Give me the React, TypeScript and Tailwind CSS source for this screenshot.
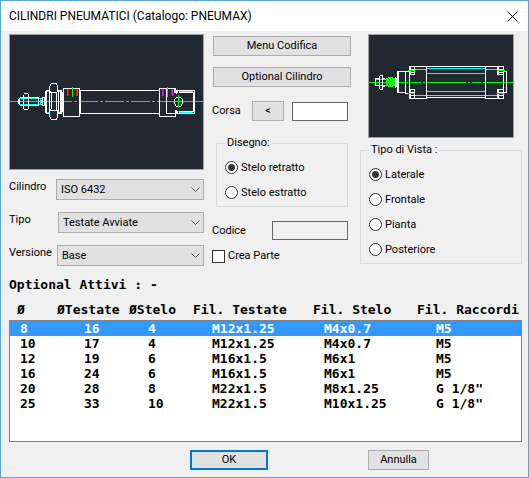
import type { ReactNode } from "react";

const ROWS = [
  ["8", "16", "4", "M12x1.25", "M4x0.7", "M5"],
  ["10", "17", "4", "M12x1.25", "M4x0.7", "M5"],
  ["12", "19", "6", "M16x1.5", "M6x1", "M5"],
  ["16", "24", "6", "M16x1.5", "M6x1", "M5"],
  ["20", "28", "8", "M22x1.5", "M8x1.25", 'G 1/8"'],
  ["25", "33", "10", "M22x1.5", "M10x1.25", 'G 1/8"'],
];

const HEADERS = ["Ø", "ØTestate", "ØStelo", "Fil. Testate", "Fil. Stelo", "Fil. Raccordi"];

const WHITE = "#ffffff";
const CYAN = "#00ffff";
const GREEN = "#00ff00";
const MAGENTA = "#ff00ff";
const RED = "#ff0000";

function CylinderDrawing() {
  return (
    <svg viewBox="10 35 193 134" className="block w-full" fill="none" shapeRendering="crispEdges" role="img" aria-label="Cilindro">
      <path d="M10 101.5H72M74 101.5H77M79 101.5H98M100 101.5H103M105 101.5H124M126 101.5H129M131 101.5H150M152 101.5H155M157 101.5H203" stroke={GREEN} />
      <g stroke={CYAN}>
        <path d="M20 98.5H38M20 104.5H38M40.5 98V105M41.5 100V103M39 98.5H42M39 104.5H42" />
        <path d="M46 91.5H50M46 112.5H50M58 91.5H62M58 112.5H62M179 91.5H193M179 112.5H193" />
      </g>
      <g stroke={WHITE}>
        <path d="M18.5 99V104M19.5 98V105M20 97.5H38M20 105.5H38M38.5 97V106M23.5 95V98M24 93.5H28M28.5 94V109M24 109.5H28M23.5 95V109" />
        <path d="M42.5 97V106M42 97.5H45M42 105.5H45M44.5 97V106" />
        <path d="M45.5 91V113M46.5 91V113M49.5 91V113M46 90.5H50M46 113.5H50" />
        <path d="M51.5 83.5H56.5L57.5 86.5V90.5L56.5 93.5V108.5L57.5 111.5V116.5L56.5 119.5H51.5L49.5 116.5V111.5L51.5 108.5V93.5L49.5 90.5V86.5Z" />
        <path d="M50 92.5H57M50 110.5H57M58.5 90V114M60.5 91V113M61.5 90V114M58 90.5H62M58 113.5H62M62.5 92V112" />
        <path d="M63.5 88.5H79.5V116.5H63.5ZM80.5 90V114M80 90.5H159M80 113.5H159" />
        <path d="M159.5 88.5H175.5V93M159.5 88V116.5H175.5V110M166.5 88V113.5H175.5M174.5 89V93" />
        <path d="M176 90.5H194.5V113.5H176M178.5 92.5H194M178.5 111.5H194M176.5 90V94M177.5 90V93M176.5 110V114M177.5 111V114M193.5 92V112" />
        <path d="M176.5 97.5H180.5L182.5 99.5V103.5L180.5 106.5H176.5L174.5 103.5V99.5Z" />
      </g>
      <path d="M72.5 87V97M167.5 87V97M178.5 95V108" stroke={GREEN} />
      <path d="M67.5 89V96M77.5 89V96M162.5 89V96M172.5 89V96" stroke={MAGENTA} />
      <path d="M68.5 89V96M76.5 89V96M163.5 89V96M171.5 89V96" stroke={RED} />
    </svg>
  );
}

function SideViewDrawing() {
  return (
    <svg viewBox="369 35 144 102" className="block w-full" fill="none" shapeRendering="crispEdges" role="img" aria-label="Vista laterale">
      <path d="M369 82.5H421M423 82.5H425M427 82.5H466M468 82.5H470M472 82.5H481M483 82.5H513" stroke={GREEN} />
      <path d="M427 68.5H485M427 73.5H485M427 91.5H485M415 95.5H497M415 69.5H427M485 69.5H497M376 79.5H386M376 85.5H386" stroke={CYAN} />
      <g stroke={WHITE}>
        <path d="M375.5 79V86M375 78.5H380M375 85.5H380M379.5 76V89M380 75.5H382.5V89.5H380M382 78.5H385M382 86.5H385" />
        <path d="M395.5 77V88M396.5 78V87M397.5 71V93M398.5 71V93M397 71.5H405.5V93.5M397 92.5H405M405 71.5H409M405 93.5H409" />
        <path d="M409.5 66V99M409 66.5H504M409 98.5H427M485 98.5H504M426 97.5H486M426.5 66V99M485.5 66V99M503.5 66V99" />
        <path d="M410.5 66V75M414.5 66V75M410.5 89V98M414.5 89V98M497.5 66V75M498.5 66V75M497.5 89V98M498.5 89V98" />
        <path d="M410 69.5H415M410 72.5H415M410 74.5H415M410 89.5H415M410 92.5H415M410 95.5H415M498 69.5H503M498 72.5H503M498 74.5H503M498 89.5H503M498 92.5H503M498 95.5H503" />
        <path d="M504 71.5H506.5V92.5H504" />
      </g>
      <path d="M408 70.5H415M408 93.5H415M497 70.5H505M497 93.5H505" stroke={GREEN} />
      <path d="M386 78H388V77H393V78H395V86H393V87H388V86H386Z" fill={GREEN} />
      <path d="M389 79.5H390M391 81.5H392M388 84.5H389M391 85.5H392" stroke="#212830" />
    </svg>
  );
}

function PushButton({ children, className = "" }: { children: ReactNode; className?: string }) {
  return (
    <button type="button" className={`flex h-5 items-center justify-center border border-[#adadad] bg-[#e1e1e1] ${className}`}>
      {children}
    </button>
  );
}

function Dropdown({ id, label, value, className }: { id: string; label: string; value: string; className: string }) {
  return (
    <div className="flex h-[21px] items-start justify-between">
      <label htmlFor={id}>{label}</label>
      <div className={`grid ${className}`}>
        <select id={id} className="col-start-1 row-start-1 h-[21px] w-full appearance-none rounded-none border border-[#adadad] bg-[#e1e1e1] px-1 leading-4">
          <option>{value}</option>
        </select>
        <svg viewBox="0 0 9 6" className="pointer-events-none col-start-1 row-start-1 mr-1 h-1.5 w-[9px] self-center justify-self-end" fill="none" stroke="#505050">
          <path d="M0.5 0.5L4.5 4.5L8.5 0.5" />
        </svg>
      </div>
    </div>
  );
}

function Radio({ name, label, checked = false }: { name: string; label: string; checked?: boolean }) {
  return (
    <label className="flex h-[25px] items-center gap-[3px]">
      <input
        type="radio"
        name={name}
        defaultChecked={checked}
        className="size-[13px] appearance-none rounded-full border border-[#333333] bg-white checked:bg-[radial-gradient(circle,#333333_3px,white_4px)]"
      />
      {label}
    </label>
  );
}

export default function App() {
  return (
    <main className="border border-[#5ba7d0] bg-[#f0f0f0] pb-[7px] font-[Roboto,sans-serif] text-[11px] leading-4 text-black">
      <header className="flex h-[30px] items-center justify-between bg-white pr-[10px] pl-2">
        <h1 className="text-xs">CILINDRI PNEUMATICI (Catalogo: PNEUMAX)</h1>
        <button type="button" aria-label="Chiudi">
          <svg viewBox="0 0 11 11" className="size-[11px]" fill="none" stroke="black">
            <path d="M0.5 0.5L10.5 10.5M10.5 0.5L0.5 10.5" />
          </svg>
        </button>
      </header>

      <div className="pt-[3px] pr-[6px] pl-2">
        <div className="grid grid-cols-[minmax(0,195fr)_minmax(0,140fr)_minmax(0,162fr)] gap-2">
          <section>
            <div className="border border-[#a0a0a0] bg-[#212830]">
              <CylinderDrawing />
            </div>
            <div className="mt-[9px] flex flex-col gap-3">
              <Dropdown id="cilindro" label="Cilindro" value="ISO 6432" className="w-[148px]" />
              <Dropdown id="tipo" label="Tipo" value="Testate Avviate" className="w-[146px]" />
              <Dropdown id="versione" label="Versione" value="Base" className="w-[147px]" />
            </div>
          </section>

          <section>
            <div className="mt-0.5 flex flex-col gap-[11px] pr-px pl-px">
              <PushButton>Menu Codifica</PushButton>
              <PushButton>Optional Cilindro</PushButton>
            </div>
            <div className="mt-[14px] flex items-center pr-1">
              <label htmlFor="corsa" className="w-10">Corsa</label>
              <PushButton className="w-8">&lt;</PushButton>
              <input id="corsa" className="ml-2 h-[19px] min-w-0 flex-1 border border-[#646464] bg-white px-1" />
            </div>
            <fieldset className="mt-[14px] mr-1 ml-1 border border-[#dcdcdc] px-2 pb-[1px]">
              <legend className="h-4 px-0.5">Disegno:</legend>
              <div className="pt-[4px]">
                <Radio name="disegno" label="Stelo retratto" checked />
                <Radio name="disegno" label="Stelo estratto" />
              </div>
            </fieldset>
            <div className="mt-[14px] flex items-center justify-between pr-1">
              <label htmlFor="codice">Codice</label>
              <input id="codice" readOnly className="h-[19px] w-[76px] border border-[#646464] bg-[#f0f0f0] px-1" />
            </div>
            <label className="mt-2 flex items-center gap-[3px]">
              <input type="checkbox" className="size-[13px] appearance-none border border-[#333333] bg-white checked:bg-[#333333]" />
              Crea Parte
            </label>
          </section>

          <section>
            <div className="mr-2 ml-2 border border-[#a0a0a0] bg-[#212830]">
              <SideViewDrawing />
            </div>
            <fieldset className="mt-1 border border-[#dcdcdc] px-2 pb-[1px]">
              <legend className="h-4 px-0.5">Tipo di Vista :</legend>
              <div className="pt-1">
                <Radio name="vista" label="Laterale" checked />
                <Radio name="vista" label="Frontale" />
                <Radio name="vista" label="Pianta" />
                <Radio name="vista" label="Posteriore" />
              </div>
            </fieldset>
          </section>
        </div>

        <div className="font-['DejaVu_Sans_Mono','Liberation_Mono',monospace] text-[13px] leading-[15px] font-bold">
          <p className="mt-[11px]">Optional Attivi : -</p>
          <table className="mt-[10px] block whitespace-pre">
            <thead className="block">
              <tr className="grid grid-cols-[40px_72px_64px_120px_104px_1fr] pl-2 text-left">
                {HEADERS.map((h) => (
                  <th key={h}>{h}</th>
                ))}
              </tr>
            </thead>
            <tbody className="mt-[3px] block h-[122px] overflow-y-auto border border-[#828282] bg-white">
              {ROWS.map((row, i) => (
                <tr key={row[0]} className={`grid grid-cols-[64px_64px_64px_112px_112px_1fr] pl-[10px] ${i === 0 ? "bg-[#3399ff] text-white" : ""}`}>
                  {row.map((cell, j) => (
                    <td key={j}>{cell}</td>
                  ))}
                </tr>
              ))}
            </tbody>
          </table>
        </div>

        <footer className="mt-2 flex justify-end gap-[100px] pr-[93px]">
          <button type="button" className="flex h-5 w-[78px] items-center justify-center border-2 border-[#0078d7] bg-[#e1e1e1]">OK</button>
          <PushButton className="w-[61px]">Annulla</PushButton>
        </footer>
      </div>
    </main>
  );
}
